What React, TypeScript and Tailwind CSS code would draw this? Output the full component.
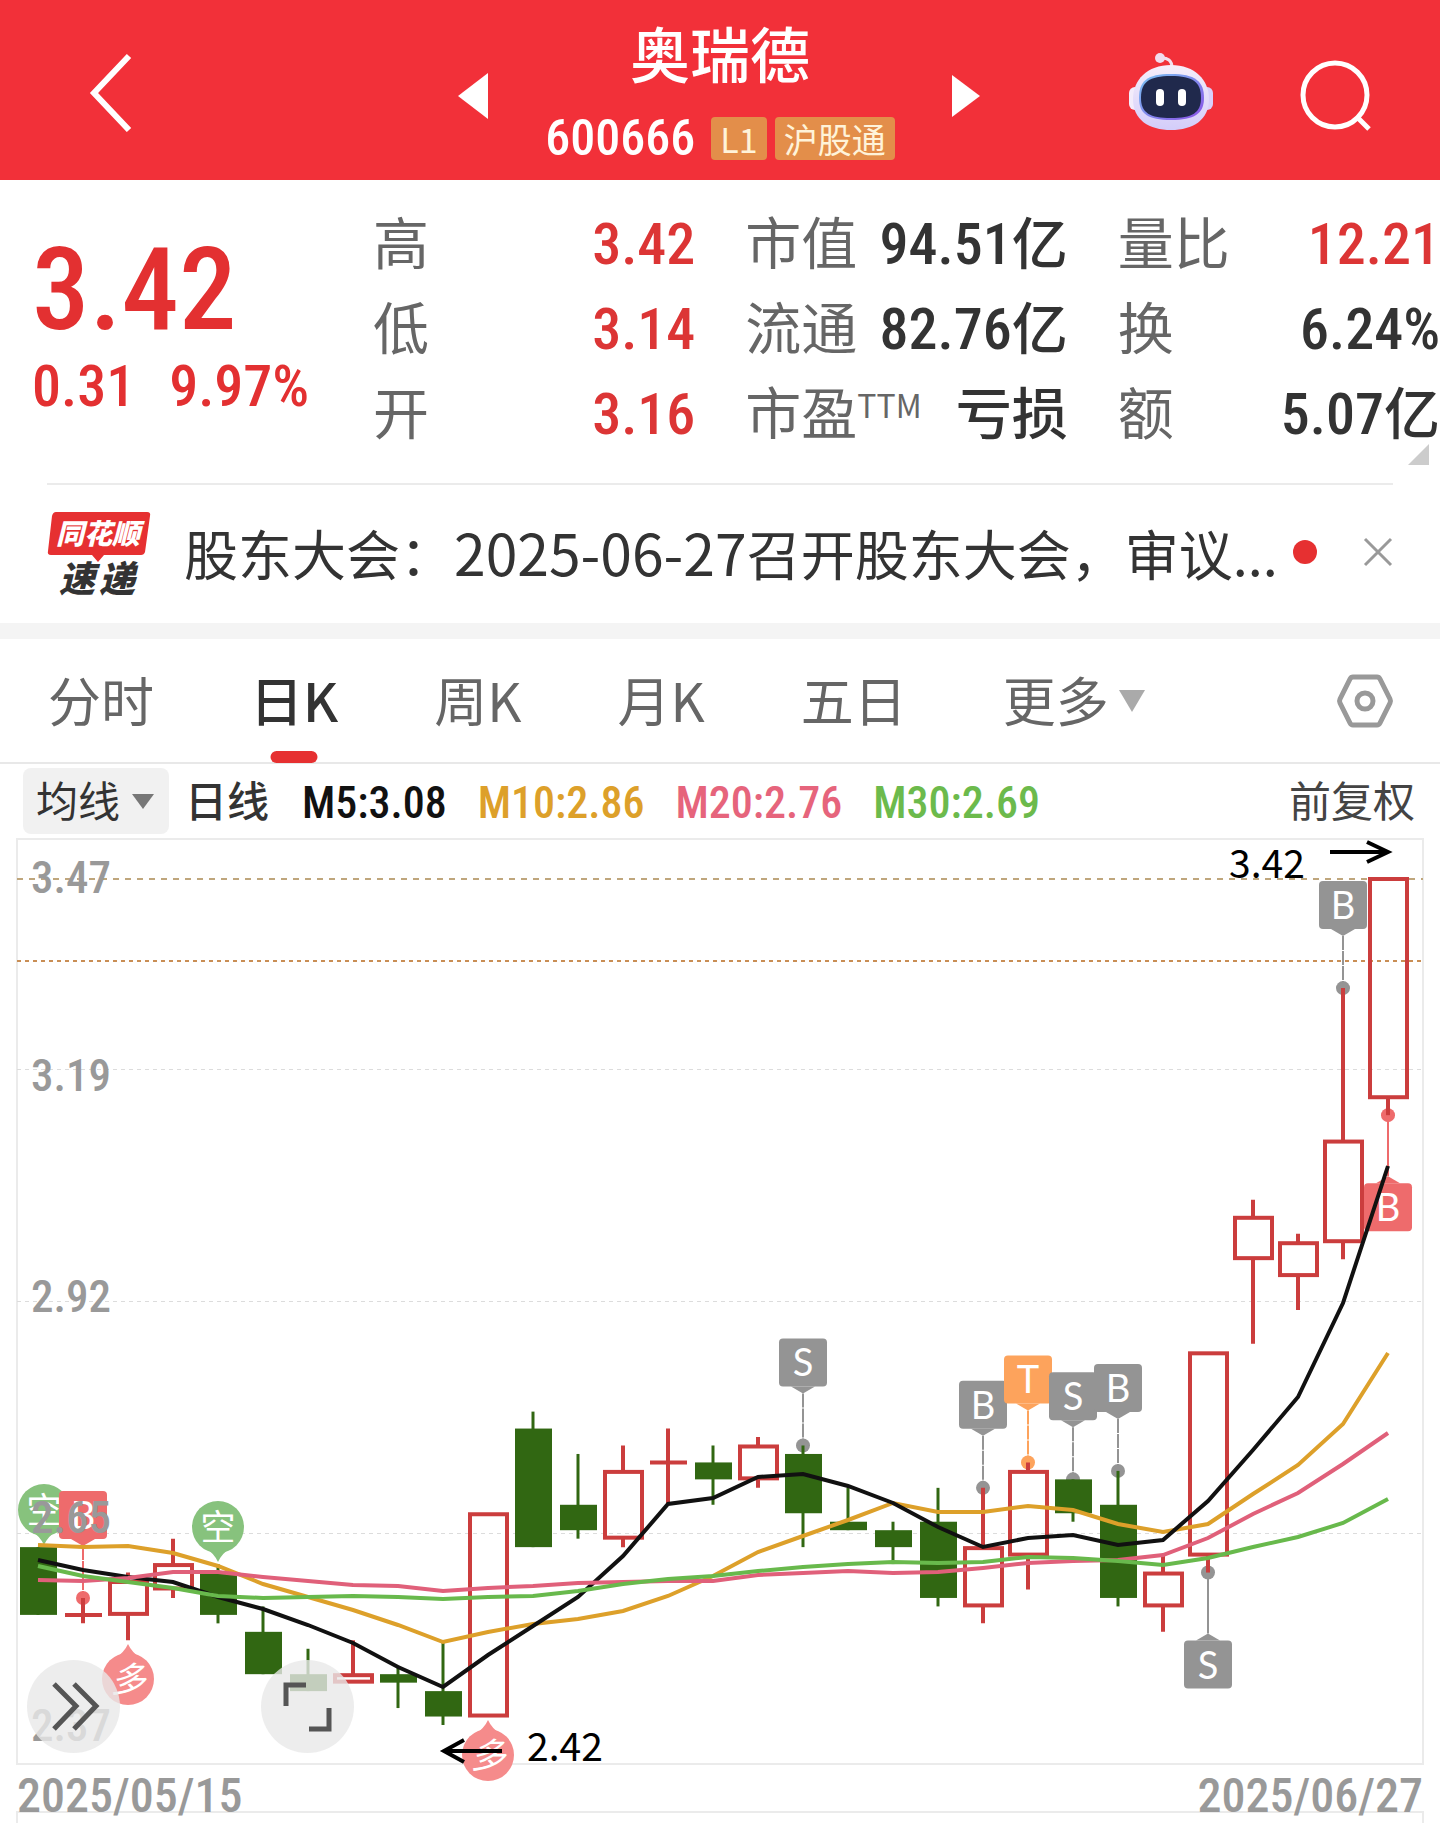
import { useState } from 'react';

const RED = '#cb3d3d';
const GREEN = '#316712';
const GREY = '#949494';

// open, close, high, low for each trading day
const candles: [number, number, number, number][] = [
  [2.63, 2.55, 2.63, 2.55],
  [2.55, 2.55, 2.57, 2.54],
  [2.55, 2.59, 2.6, 2.52],
  [2.58, 2.61, 2.64, 2.57],
  [2.6, 2.55, 2.61, 2.54],
  [2.53, 2.48, 2.56, 2.48],
  [2.48, 2.46, 2.51, 2.46],
  [2.47, 2.48, 2.52, 2.47],
  [2.48, 2.47, 2.49, 2.44],
  [2.46, 2.43, 2.52, 2.42],
  [2.43, 2.67, 2.67, 2.43],
  [2.77, 2.63, 2.79, 2.63],
  [2.68, 2.65, 2.74, 2.64],
  [2.64, 2.72, 2.75, 2.63],
  [2.73, 2.73, 2.77, 2.68],
  [2.73, 2.71, 2.75, 2.68],
  [2.71, 2.75, 2.76, 2.7],
  [2.74, 2.67, 2.75, 2.63],
  [2.66, 2.65, 2.7, 2.65],
  [2.65, 2.63, 2.66, 2.61],
  [2.66, 2.57, 2.7, 2.56],
  [2.56, 2.63, 2.7, 2.54],
  [2.62, 2.72, 2.73, 2.58],
  [2.71, 2.67, 2.71, 2.66],
  [2.68, 2.57, 2.72, 2.56],
  [2.56, 2.6, 2.62, 2.53],
  [2.62, 2.86, 2.86, 2.6],
  [2.97, 3.02, 3.04, 2.87],
  [2.95, 2.99, 3.0, 2.91],
  [2.99, 3.11, 3.29, 2.97],
  [3.16, 3.42, 3.42, 3.14],
];

// one y per candle
const averages = [
  { color: '#dda02a', ys: [1545, 1547, 1546, 1553, 1566, 1584, 1597, 1610, 1625, 1642, 1632, 1624, 1619, 1611, 1596, 1576, 1552, 1536, 1520, 1503, 1512, 1512, 1506, 1510, 1524, 1532, 1524, 1494, 1465, 1424, 1353] },
  { color: '#111111', ys: [1560, 1570, 1577, 1582, 1597, 1609, 1625, 1643, 1667, 1687, 1655, 1626, 1597, 1556, 1504, 1498, 1477, 1474, 1486, 1503, 1527, 1547, 1538, 1535, 1545, 1540, 1501, 1450, 1397, 1303, 1166] },
  { color: '#e0607a', ys: [1580, 1581, 1578, 1572, 1572, 1577, 1581, 1585, 1586, 1591, 1588, 1586, 1583, 1582, 1581, 1581, 1575, 1573, 1571, 1573, 1572, 1568, 1563, 1561, 1560, 1555, 1538, 1514, 1493, 1464, 1433] },
  { color: '#68b94c', ys: [1566, 1576, 1582, 1588, 1596, 1598, 1597, 1596, 1597, 1599, 1597, 1596, 1591, 1584, 1579, 1576, 1571, 1567, 1564, 1562, 1563, 1562, 1557, 1558, 1561, 1565, 1558, 1547, 1537, 1523, 1499] },
];

const stats = [
  [['高', '3.42', '', true], ['低', '3.14', '', true], ['开', '3.16', '', true]],
  [['市值', '94.51', '亿', false], ['流通', '82.76', '亿', false], ['市盈', '', '亏损', false]],
  [['量比', '12.21', '', true], ['换', '6.24%', '', false], ['额', '5.07', '亿', false]],
] as [string, string, string, boolean][][];

const tabs = ['分时', '日K', '周K', '月K', '五日'];

const cx = (i: number) => 38 + i * 45;
const py = (price: number) => 878 + (3.42 - price) * 847;

function Candle({ i }: { i: number }) {
  const [open, close, high, low] = candles[i];
  const x = cx(i);
  const top = py(Math.max(open, close));
  const bottom = py(Math.min(open, close));
  if (open === close) {
    return (
      <g stroke={RED} strokeWidth="4">
        <path d={`M${x} ${py(high)}V${py(low)}M${x - 18} ${top}H${x + 19}`} />
      </g>
    );
  }
  if (close < open) {
    return (
      <g>
        <path d={`M${x} ${py(high)}V${py(low)}`} stroke={GREEN} strokeWidth="3" />
        <rect x={x - 18} y={top} width="37" height={bottom - top} fill={GREEN} />
      </g>
    );
  }
  return (
    <g stroke={RED} fill="none" strokeWidth="4">
      <path d={`M${x} ${py(high)}V${top}M${x} ${bottom}V${py(low)}`} />
      <rect x={x - 18} y={top + 1} width="37" height={bottom - top - 2} />
    </g>
  );
}

function Marker({ i, price, letter, color = GREY, below = false, gap = 107 }: { i: number; price: number; letter: string; color?: string; below?: boolean; gap?: number }) {
  const x = cx(i);
  const y = py(price);
  const top = below ? y + gap - 39 : y - gap;
  const tip = below ? top - 7 : top + 55;
  const base = below ? top : top + 48;
  return (
    <g fill={color}>
      <path d={`M${x} ${tip}V${y}`} stroke={color} strokeWidth="2" strokeDasharray={below ? undefined : '14 1'} />
      <circle cx={x} cy={y} r="7" />
      <rect x={x - 24} y={top} width="48" height="48" rx="4" />
      <path d={`M${x - 12} ${base}L${x} ${tip}L${x + 12} ${base}Z`} />
      <text x={x} y={top + 38} fill="#fff" textAnchor="middle" fontSize="38" className="font-['Lato']">
        {letter}
      </text>
    </g>
  );
}

function Bubble({ x, y, letter, long }: { x: number; y: number; letter: string; long: boolean }) {
  const s = long ? -1 : 1;
  return (
    <g fill={long ? '#f58b8b' : '#87c27d'}>
      <circle cx={x} cy={y} r="26" />
      <path d={`M${x - 14} ${y + 20 * s}Q${x - 4} ${y + 26 * s} ${x} ${y + 35 * s}Q${x + 4} ${y + 26 * s} ${x + 14} ${y + 20 * s}Z`} />
      <text x={x} y={y + 13} fill="#fff" textAnchor="middle" fontSize="35" fontStyle={long ? 'italic' : undefined}>
        {letter}
      </text>
    </g>
  );
}

function Robot() {
  return (
    <svg viewBox="0 0 84 78" className="mt-1 h-[78px] w-[84px]" aria-hidden="true">
      <defs>
        <linearGradient id="shell" x1="0" y1="0" x2="0" y2="1">
          <stop offset="0" stopColor="#f6eefa" />
          <stop offset="1" stopColor="#d3cdfa" />
        </linearGradient>
        <linearGradient id="rim" x1="0" y1="0" x2="1" y2="1">
          <stop offset="0" stopColor="#79c4f2" />
          <stop offset="1" stopColor="#8a4fe6" />
        </linearGradient>
      </defs>
      <path d="M31 5Q43 4 43 15" fill="none" stroke="#f3dfee" strokeWidth="3" />
      <circle cx="31" cy="5" r="5" fill="#f1dcee" />
      <rect x="0" y="34" width="12" height="23" rx="6" fill="#f3ecfb" />
      <rect x="72" y="34" width="12" height="23" rx="6" fill="#d9d0fa" />
      <path d="M42 12C66 12 80 27 80 46C80 67 64 77 42 77S4 67 4 46C4 27 18 12 42 12Z" fill="url(#shell)" />
      <path d="M42 21C66 21 75 28 75 45C75 61 65 67 42 67S10 61 10 45C10 28 18 21 42 21Z" fill="url(#rim)" />
      <path d="M42 23C64 23 72 29 72 45C72 60 63 65 42 65S12 60 12 45C12 29 20 23 42 23Z" fill="#20294c" />
      <rect x="27" y="36" width="8" height="17" rx="4" fill="#fff" />
      <rect x="49" y="36" width="8" height="17" rx="4" fill="#fff" />
    </svg>
  );
}

function Header() {
  return (
    <header className="grid h-[180px] grid-cols-[1fr_464px_1fr] items-center bg-[#f23039] text-white">
      <div className="flex items-center justify-between pl-[86px]">
        <button type="button" aria-label="返回">
          <svg viewBox="0 0 48 80" className="mt-1 h-[80px] w-[48px]" fill="none" stroke="#fff" strokeWidth="6">
            <path d="M43 4L8 41L43 78" />
          </svg>
        </button>
        <button type="button" aria-label="上一只">
          <svg viewBox="0 0 30 46" className="mt-3 h-[46px] w-[30px]" fill="#fff">
            <path d="M30 0V46L0 23Z" />
          </svg>
        </button>
      </div>
      <div className="flex flex-col items-center pt-1">
        <h1 className="text-[60px] leading-[72px] font-medium">奥瑞德</h1>
        <div className="mt-5 flex items-center gap-2">
          <span className="mr-2 font-['Roboto_Condensed'] text-[50px] leading-[60px] font-medium">600666</span>
          <span className="flex h-[43px] items-center rounded-[4px] bg-[#e38e4a] px-[9px] text-[34px] text-[#fff3d9]">L1</span>
          <span className="flex h-[43px] items-center rounded-[4px] bg-[#e38e4a] px-[9px] text-[34px] text-[#fff3d9]">沪股通</span>
        </div>
      </div>
      <div className="flex items-center justify-between pr-[67px]">
        <button type="button" aria-label="下一只">
          <svg viewBox="0 0 28 42" className="mt-3 h-[42px] w-[28px]" fill="#fff">
            <path d="M0 0V42L28 21Z" />
          </svg>
        </button>
        <div className="flex items-center gap-[86px]">
          <button type="button" aria-label="智能助手">
            <Robot />
          </button>
          <button type="button" aria-label="搜索">
            <svg viewBox="0 0 74 72" className="mt-3 h-[72px] w-[74px]" fill="none" stroke="#fff" strokeWidth="5">
              <circle cx="36" cy="35" r="32" />
              <path d="M59 58L70 69" />
            </svg>
          </button>
        </div>
      </div>
    </header>
  );
}

function Quote() {
  return (
    <section className="relative flex h-[303px] pt-[18px]">
      <div className="w-[373px] shrink-0 pt-8 pl-[32px] font-['Roboto_Condensed'] font-medium text-[#e33031]">
        <div className="text-[115px] leading-[120px]">3.42</div>
        <div className="flex gap-[34px] text-[58px] leading-[72px]">
          <span>0.31</span>
          <span>9.97%</span>
        </div>
      </div>
      <div className="grid flex-1 grid-cols-3 gap-x-[50px]">
        {stats.map((col, c) => (
          <dl key={c}>
            {col.map(([label, num, unit, red]) => (
              <div key={label} className="flex h-[85px] items-baseline justify-between text-[56px] leading-[84px] whitespace-nowrap">
                <dt className="text-[#666]">
                  {label}
                  {label === '市盈' && <sup className="text-[32px] leading-none">TTM</sup>}
                </dt>
                <dd className={red ? 'font-medium text-[#dc3535]' : 'font-medium text-[#333]'}>
                  <span className="font-['Roboto_Condensed'] text-[58px]">{num}</span>
                  {unit}
                </dd>
              </div>
            ))}
          </dl>
        ))}
      </div>
      <svg viewBox="0 0 21 21" className="absolute right-[11px] bottom-[18px] h-[21px] w-[21px]" fill="#ccc" aria-hidden="true">
        <path d="M21 0V21H0Z" />
      </svg>
    </section>
  );
}

function News() {
  return (
    <section className="mx-[47px] flex h-[140px] items-center border-t-2 border-[#ebebeb] pb-1">
      <svg viewBox="0 -3 104 92" className="h-[92px] w-[104px] shrink-0 overflow-visible" role="img" aria-label="同花顺速递">
        <path d="M9 3H100Q104 3 103 7L98 43Q97 46 94 46H57L51 53L45 46H4Q0 46 1 42L5 7Q6 3 9 3Z" fill="#e63031" />
        <text x="51" y="35" textAnchor="middle" fontSize="28" fontWeight="900" fontStyle="italic" fill="#fff">同花顺</text>
        <text x="30" y="83" textAnchor="middle" fontSize="36" fontWeight="900" fontStyle="italic" fill="#333">速</text>
        <text x="70" y="83" textAnchor="middle" fontSize="36" fontWeight="900" fontStyle="italic" fill="#333">递</text>
      </svg>
      <a href="#news" className="ml-[33px] min-w-0 flex-1 text-[54px] leading-[80px] whitespace-nowrap text-[#333]">
        股东大会：<span className="text-[57px]">2025-06-27</span>召开股东大会，审议...
      </a>
      <span className="size-[24px] shrink-0 rounded-full bg-[#e63031]" />
      <button type="button" aria-label="关闭" className="ml-[46px]">
        <svg viewBox="0 0 30 30" className="h-[30px] w-[30px]" fill="none" stroke="#999" strokeWidth="3">
          <path d="M2 2L28 28M28 2L2 28" />
        </svg>
      </button>
    </section>
  );
}

function Tabs() {
  const [active, setActive] = useState('日K');
  return (
    <nav className="flex h-[125px] items-center gap-[96px] border-b-2 border-[#e8e8e8] pr-[46px] pb-1 pl-[48px] text-[53px] leading-[80px] whitespace-nowrap text-[#666]">
      {tabs.map((tab) => (
        <button key={tab} type="button" onClick={() => setActive(tab)} className={tab === active ? 'relative font-medium text-[#333]' : 'relative'}>
          {tab}
          {tab === active && <span className="absolute -bottom-[24px] left-1/2 h-[12px] w-[47px] -translate-x-1/2 rounded-[6px] bg-[#e63031]" />}
        </button>
      ))}
      <button type="button" className="flex items-center gap-[10px]">
        更多
        <svg viewBox="0 0 26 22" className="mt-1 h-[22px] w-[26px]" fill="#aaa" aria-hidden="true">
          <path d="M0 0H26L13 22Z" />
        </svg>
      </button>
      <button type="button" aria-label="设置" className="ml-auto pt-1">
        <svg viewBox="0 0 58 56" className="h-[56px] w-[58px]" fill="none" stroke="#999" strokeWidth="5" strokeLinejoin="round">
          <path d="M17 4H41Q43 4 44 6L54 26Q55 28 54 30L44 50Q43 52 41 52H17Q15 52 14 50L4 30Q3 28 4 26L14 6Q15 4 17 4Z" />
          <circle cx="29" cy="28" r="8" />
        </svg>
      </button>
    </nav>
  );
}

function Indicators() {
  return (
    <div className="flex h-[74px] items-center pr-[25px] pl-[23px] text-[42px] leading-[62px] whitespace-nowrap">
      <div className="relative">
        <select aria-label="指标" className="h-[66px] w-[146px] appearance-none rounded-[8px] bg-[#f1f1f1] pb-1 pl-[13px] text-[#333]">
          <option>均线</option>
        </select>
        <svg viewBox="0 0 22 15" className="pointer-events-none absolute top-[26px] right-[15px] h-[15px] w-[22px]" fill="#777" aria-hidden="true">
          <path d="M0 0H22L11 15Z" />
        </svg>
      </div>
      <span className="ml-4 pb-1 font-medium text-[#333]">日线</span>
      <div className="ml-[33px] flex gap-[31px] pt-1 font-['Roboto_Condensed'] text-[44px] font-medium">
        <span className="text-[#111]">M5:3.08</span>
        <span className="text-[#dda02a]">M10:2.86</span>
        <span className="text-[#e6647c]">M20:2.76</span>
        <span className="text-[#6cba4c]">M30:2.69</span>
      </div>
      <button type="button" className="ml-auto pb-1 text-[#444]">前复权</button>
    </div>
  );
}

function Chart() {
  return (
    <section className="relative">
      <svg viewBox="0 838 1440 928" className="block w-full overflow-visible" role="img" aria-label="日K线图">
        <rect x="17" y="839" width="1406" height="925" fill="none" stroke="#ebebeb" strokeWidth="2" />
        <g strokeWidth="1" stroke="#dcdcdc" strokeDasharray="4 4">
          <path d="M17 1069.5H1423M17 1301.5H1423M17 1533.5H1423" />
        </g>
        <path d="M17 879H1423" stroke="#bfa67c" strokeWidth="2" strokeDasharray="6 6" />
        <path d="M17 961H1423" stroke="#c98e55" strokeWidth="2" strokeDasharray="4 4" />

        <Bubble x={44} y={1510} letter="空" long={false} />
        <Bubble x={218} y={1527} letter="空" long={false} />
        <Bubble x={128} y={1679} letter="多" long />
        <Bubble x={488} y={1755} letter="多" long />
        <Marker i={1} price={2.57} letter="B" color="#ee6b6c" />
        <Marker i={17} price={2.75} letter="S" />
        <Marker i={21} price={2.7} letter="B" />
        <Marker i={22} price={2.73} letter="T" color="#fda35c" />
        <Marker i={23} price={2.71} letter="S" />
        <Marker i={24} price={2.72} letter="B" />
        <Marker i={26} price={2.6} letter="S" below />
        <Marker i={29} price={3.29} letter="B" />
        <Marker i={30} price={3.14} letter="B" color="#ee6b6c" below />

        {candles.map((_, i) => (
          <Candle key={i} i={i} />
        ))}
        {averages.map(({ color, ys }) => (
          <polyline key={color} points={ys.map((y, i) => `${cx(i)},${y}`).join(' ')} fill="none" stroke={color} strokeWidth="4" />
        ))}

        <g fill="#999" fontSize="45" fontWeight="500" className="font-['Roboto_Condensed']">
          <text x="31" y="893">3.47</text>
          <text x="31" y="1091">3.19</text>
          <text x="31" y="1312">2.92</text>
          <text x="31" y="1533">2.65</text>
          <text x="31" y="1741">2.37</text>
        </g>
        <g fontSize="39">
          <text x="1229" y="878">3.42</text>
          <text x="527" y="1761">2.42</text>
        </g>
        <g fill="none" stroke="#000" strokeWidth="4">
          <path d="M1330 852H1388M1367 842L1388 852L1367 862" />
          <path d="M502 1751H444M464 1740L444 1751L464 1762" />
        </g>
      </svg>
      <button type="button" aria-label="展开" className="absolute bottom-[13px] left-[27px] size-[93px] rounded-full bg-[#e9e9e9]/80">
        <svg viewBox="0 0 93 93" fill="none" stroke="#555" strokeWidth="5">
          <path d="M27 24L49 46L27 69M47 24L69 46L47 69" />
        </svg>
      </button>
      <button type="button" aria-label="全屏" className="absolute bottom-[13px] left-[261px] size-[93px] rounded-full bg-[#e9e9e9]/80">
        <svg viewBox="0 0 93 93" fill="none" stroke="#555" strokeWidth="5">
          <path d="M45 25H25V46M68 48V69H48" />
        </svg>
      </button>
    </section>
  );
}

export default function App() {
  return (
    <main className="overflow-hidden bg-white font-['Noto_Sans_CJK_SC',sans-serif] text-black">
      <Header />
      <Quote />
      <News />
      <div className="h-[16px] bg-[#f4f4f4]" />
      <Tabs />
      <Indicators />
      <Chart />
      <div className="flex h-[45px] justify-between px-[17px] pt-[6px] font-['Roboto_Condensed'] text-[48px] leading-[48px] font-medium text-[#999]">
        <span>2025/05/15</span>
        <span>2025/06/27</span>
      </div>
      <div className="mx-[16px] h-[12px] border-x-2 border-t-2 border-[#ebebeb]" />
    </main>
  );
}
